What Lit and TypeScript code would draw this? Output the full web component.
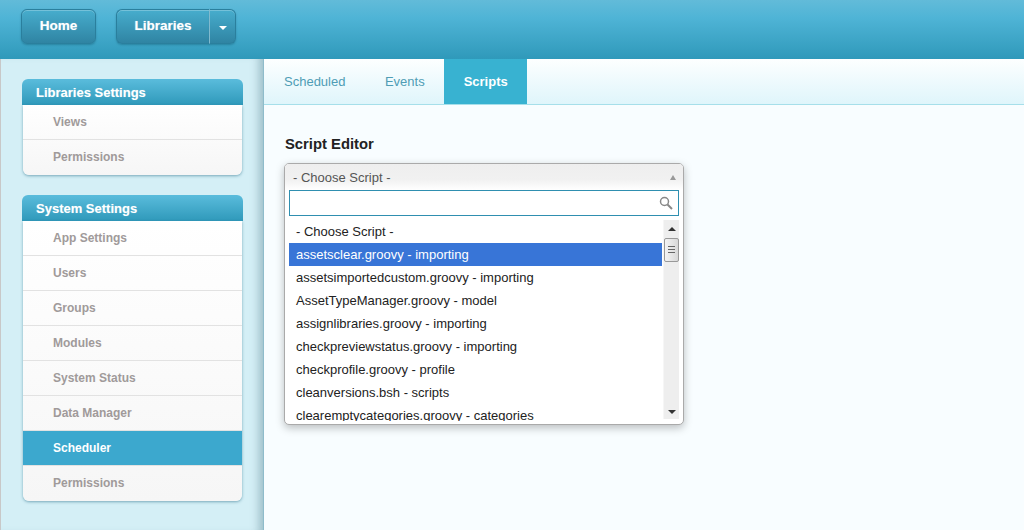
import { LitElement, html, css } from "lit";
import { customElement } from "lit/decorators.js";

const librariesItems = ["Views", "Permissions"];
const systemItems = ["App Settings", "Users", "Groups", "Modules", "System Status", "Data Manager", "Scheduler", "Permissions"];
const scripts = [
  "- Choose Script -",
  "assetsclear.groovy - importing",
  "assetsimportedcustom.groovy - importing",
  "AssetTypeManager.groovy - model",
  "assignlibraries.groovy - importing",
  "checkpreviewstatus.groovy - importing",
  "checkprofile.groovy - profile",
  "cleanversions.bsh - scripts",
  "clearemptycategories.groovy - categories",
];

@customElement("app-root")
export class AppRoot extends LitElement {
  static styles = css`
    :host {
      display: block;
      width: 1024px;
      height: 530px;
      overflow: hidden;
      font-family: "Liberation Sans", Arial, sans-serif;
    }
    .topbar {
      height: 59px;
      box-sizing: border-box;
      padding: 9px 0 0 21px;
      display: flex;
      gap: 20px;
      align-items: flex-start;
      background: linear-gradient(#62bbd9, #4fb4d6 30%, #2f99ba);
    }
    .btn {
      height: 35px;
      box-sizing: border-box;
      border: 1px solid #2a7f9d;
      border-radius: 6px;
      background: linear-gradient(#47adcd, #2f84a3);
      box-shadow: inset 0 1px 0 rgba(255, 255, 255, 0.25), 0 1px 2px rgba(0, 60, 80, 0.3);
      color: #fff;
      font-size: 13.5px;
      font-weight: bold;
      display: flex;
      align-items: center;
      justify-content: center;
      text-shadow: 0 0 1px rgba(255, 255, 255, 0.5);
    }
    .home {
      width: 75px;
      padding-bottom: 2px;
    }
    .split {
      display: flex;
    }
    .libraries {
      width: 94px;
      padding-bottom: 2px;
      border-radius: 6px 0 0 6px;
      border-right: 1px solid #8cc6d9;
    }
    .caret {
      width: 26px;
      border-left: none;
      border-radius: 0 6px 6px 0;
    }
    .caret i {
      width: 0;
      height: 0;
      margin-top: 2px;
      border: 4px solid transparent;
      border-top: 4px solid #fff;
      border-bottom: none;
    }
    .body {
      display: flex;
      height: 471px;
    }
    .sidebar {
      width: 264px;
      box-sizing: border-box;
      padding: 20px 20px 0 21px;
      background: #d4eff6;
      border-left: 1px solid #c8c8c8;
      border-right: 1px solid #8fbccb;
      box-shadow: inset -10px 0 8px -6px rgba(90, 130, 145, 0.45);
      display: flex;
      flex-direction: column;
      gap: 20px;
    }
    .panel {
      width: 221px;
    }
    .panel h3 {
      margin: 0;
      height: 26px;
      box-sizing: border-box;
      padding: 1px 0 0 14px;
      line-height: 25px;
      color: #fff;
      font-size: 13px;
      font-weight: bold;
      border-radius: 6px 6px 0 0;
      background: linear-gradient(#5abcdc, #2f99ba);
      text-shadow: 0 0 1px rgba(255, 255, 255, 0.4);
    }
    .items {
      margin: 0 1px;
      border-radius: 0 0 6px 6px;
      box-shadow: 0 1px 3px rgba(40, 110, 135, 0.55);
      overflow: hidden;
      background: linear-gradient(#fff, #f6f6f6);
    }
    .item {
      height: 35px;
      box-sizing: border-box;
      padding-left: 30px;
      line-height: 34px;
      color: #a09a9a;
      font-size: 12px;
      font-weight: bold;
      border-bottom: 1px solid #e2e2e2;
    }
    .item:last-child {
      border-bottom: none;
    }
    .item.active {
      background: #3ca8ce;
      color: #fff;
    }
    .main {
      flex: 1;
      background: #f8fdff;
    }
    .tabs {
      height: 46px;
      box-sizing: border-box;
      display: flex;
      background: linear-gradient(#fdffff, #dff5fb);
      border-bottom: 1px solid #a6dfea;
    }
    .tab {
      height: 45px;
      box-sizing: border-box;
      padding: 0 19.5px 0 20px;
      line-height: 45px;
      color: #4f9db5;
      font-size: 13px;
    }
    .tab.active {
      width: 83px;
      padding: 0;
      text-align: center;
      background: #38b2d1;
      color: #fff;
      font-weight: bold;
    }
    .content {
      padding: 31px 0 0 20px;
    }
    .content h2 {
      margin: 0 0 10px 1px;
      font-size: 14.8px;
      line-height: 17px;
      font-weight: bold;
      color: #222;
    }
    .select {
      width: 400px;
      height: 262px;
      box-sizing: border-box;
      border: 1px solid #aaa;
      border-radius: 5px;
      background: #fff;
      box-shadow: 0 3px 8px rgba(0, 0, 0, 0.25);
      overflow: hidden;
    }
    .chosen {
      height: 26px;
      box-sizing: border-box;
      padding: 0 7px 0 8px;
      display: flex;
      align-items: center;
      justify-content: space-between;
      color: #555;
      font-size: 13px;
      background: linear-gradient(#eee, #f1f1f1 60%, #fff);
    }
    .chosen i {
      width: 0;
      height: 0;
      border: 3px solid transparent;
      border-bottom: 5px solid #999;
      border-top: none;
    }
    .search {
      height: 26px;
      box-sizing: border-box;
      margin: 0 4px;
      border: 1px solid #2f8fb0;
      display: flex;
      align-items: center;
      justify-content: flex-end;
      padding-right: 5px;
      background: #fff;
    }
    .list {
      position: relative;
      height: 201px;
      margin: 4px 4px 0;
      overflow: hidden;
    }
    .row {
      height: 23px;
      margin-right: 17px;
      padding-left: 7px;
      line-height: 23px;
      font-size: 13px;
      color: #222;
      white-space: nowrap;
    }
    .row.on {
      background: #3875d7;
      color: #fff;
    }
    .bar {
      position: absolute;
      top: 0;
      right: 0;
      bottom: 2px;
      width: 16px;
      background: #eee;
      border-left: 1px solid #f6f6f6;
      box-sizing: border-box;
    }
    .arrow {
      position: absolute;
      left: 4px;
      width: 0;
      height: 0;
      border: 4px solid transparent;
    }
    .arrow.up {
      top: 7px;
      border-bottom: 4px solid #333;
      border-top: none;
    }
    .arrow.down {
      bottom: 5px;
      border-top: 4px solid #333;
      border-bottom: none;
    }
    .thumb {
      position: absolute;
      top: 18px;
      left: 0;
      width: 15px;
      height: 24px;
      box-sizing: border-box;
      border: 1px solid #999;
      border-radius: 2px;
      background: linear-gradient(90deg, #f4f4f4, #d8d8d8);
    }
    .thumb::after {
      content: "";
      position: absolute;
      left: 3px;
      top: 7px;
      width: 7px;
      height: 7px;
      background: repeating-linear-gradient(#666 0 1px, transparent 1px 3px);
    }
  `;

  panel(title: string, items: string[], active = "") {
    return html`
      <div class="panel">
        <h3>${title}</h3>
        <div class="items">
          ${items.map(
            (i) => html`<div class="item ${i === active ? "active" : ""}">${i}</div>`
          )}
        </div>
      </div>
    `;
  }

  render() {
    return html`
      <div class="topbar">
        <div class="btn home">Home</div>
        <div class="split">
          <div class="btn libraries">Libraries</div>
          <div class="btn caret"><i></i></div>
        </div>
      </div>
      <div class="body">
        <div class="sidebar">
          ${this.panel("Libraries Settings", librariesItems)}
          ${this.panel("System Settings", systemItems, "Scheduler")}
        </div>
        <div class="main">
          <div class="tabs">
            <div class="tab">Scheduled</div>
            <div class="tab">Events</div>
            <div class="tab active">Scripts</div>
          </div>
          <div class="content">
            <h2>Script Editor</h2>
            <div class="select">
              <div class="chosen"><span>- Choose Script -</span><i></i></div>
              <div class="search">
                <svg width="14" height="14" viewBox="0 0 14 14" fill="none" stroke="#888">
                  <circle cx="5.5" cy="5.5" r="4" stroke-width="1.5"></circle>
                  <path d="M8.5 8.5L13 13" stroke-width="2"></path>
                </svg>
              </div>
              <div class="list">
                ${scripts.map(
                  (s, i) => html`<div class="row ${i === 1 ? "on" : ""}">${s}</div>`
                )}
                <div class="bar">
                  <span class="arrow up"></span>
                  <div class="thumb"></div>
                  <span class="arrow down"></span>
                </div>
              </div>
            </div>
          </div>
        </div>
      </div>
    `;
  }
}
